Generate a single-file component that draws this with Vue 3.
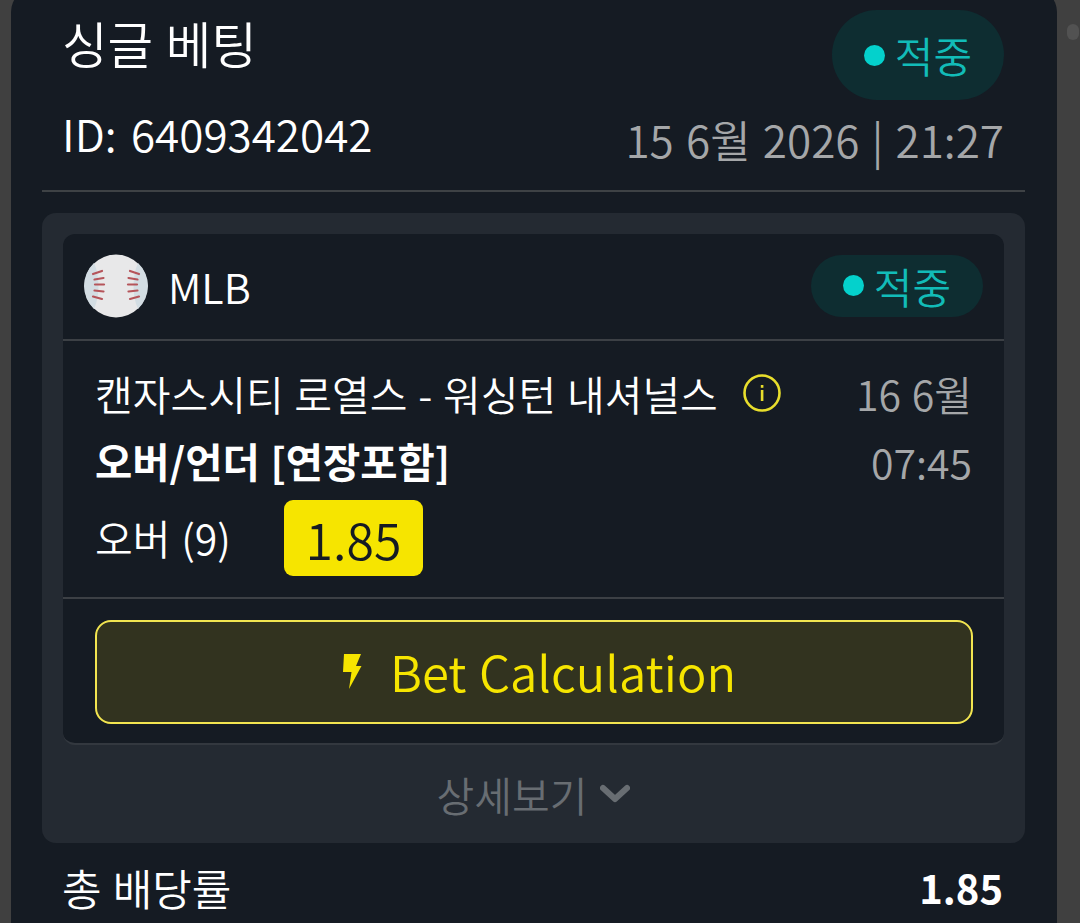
<template>
  <div class="screen">
    <div class="panel">
      <div class="head">
        <div class="head-row">
          <h1 class="title">싱글 베팅</h1>
          <div class="badge badge-lg"><span class="dot"></span>적중</div>
        </div>
        <div class="meta-row">
          <span class="bet-id">ID: {{ bet.id }}</span>
          <span class="bet-date">{{ bet.date }}</span>
        </div>
      </div>

      <div class="outer-card">
        <div class="event-card">
          <div class="league-row">
            <div class="league">
              <svg class="ball" viewBox="0 0 64 64">
                <circle cx="32" cy="32" r="31.5" fill="#e8e8e9" />
                <path d="M10 9 C16 22 16 42 10 55 A31.5 31.5 0 0 1 10 9Z" fill="#d3dde3" />
                <path d="M54 9 C48 22 48 42 54 55 A31.5 31.5 0 0 0 54 9Z" fill="#d3dde3" />
                <g stroke="#b5545a" stroke-width="2.2" stroke-linecap="round" fill="none">
                  <path v-for="s in stitches" :key="s" :d="s" />
                </g>
              </svg>
              <span>MLB</span>
            </div>
            <div class="badge badge-sm"><span class="dot"></span>적중</div>
          </div>

          <div class="match">
            <div class="match-main">
              <div class="teams">
                <span>캔자스시티 로열스 - 워싱턴 내셔널스</span>
                <svg class="info" viewBox="0 0 38 38">
                  <circle cx="19" cy="19" r="17.5" fill="none" stroke="#e8de2c" stroke-width="2.6" />
                  <rect x="17.8" y="16" width="2.6" height="11" fill="#e8de2c" />
                  <rect x="17.8" y="11" width="2.6" height="2.8" fill="#e8de2c" />
                </svg>
              </div>
              <div class="market">오버/언더 [연장포함]</div>
              <div class="pick-row">
                <span class="pick">오버 (9)</span>
                <span class="odds">1.85</span>
              </div>
            </div>
            <div class="match-time">
              <span>16 6월</span>
              <span>07:45</span>
            </div>
          </div>

          <div class="calc-wrap">
            <button class="calc">
              <svg class="bolt" viewBox="0 0 20 36">
                <path d="M2 1 H19 L14 13 H19.5 L7 36 L9.5 19 H1Z" fill="#f6e500" />
              </svg>
              Bet Calculation
            </button>
          </div>
        </div>

        <div class="more">
          상세보기
          <svg class="chev" viewBox="0 0 30 20">
            <path d="M3 4 L15 15 L27 4" fill="none" stroke="#686d72" stroke-width="6" stroke-linecap="round" stroke-linejoin="round" />
          </svg>
        </div>
      </div>

      <div class="total-row">
        <span>총 배당률</span>
        <span class="total">1.85</span>
      </div>
    </div>
    <span class="scroll-dot"></span>
  </div>
</template>

<script setup>
const bet = {
  id: "6409342042",
  date: "15 6월 2026 | 21:27",
};

const stitches = [
  "M9 20 L18 17", "M10.5 25.5 L19.5 24", "M11 30.5 L20 30.5", "M10.5 36.5 L19.5 37.5", "M9 42.5 L18 45",
  "M55 20 L46 17", "M53.5 25.5 L44.5 24", "M53 30.5 L44 30.5", "M53.5 36.5 L44.5 37.5", "M55 42.5 L46 45",
];
</script>

<style>
html,
body {
  margin: 0;
  background: #404040;
  overflow: hidden;
}
</style>

<style scoped>
.screen {
  position: relative;
  width: 1080px;
  height: 923px;
  overflow: hidden;
  background: #404040;
  font-family: "Noto Sans CJK KR", "Noto Sans", sans-serif;
  font-weight: 350;
  word-spacing: 1.6px;
  color: #fff;
}

.panel {
  width: 1046px;
  height: 960px;
  margin-left: 11px;
  margin-top: -12px;
  padding: 12px 32px 0 31px;
  box-sizing: border-box;
  background: #151b23;
  border-radius: 24px;
}

.head {
  border-bottom: 2px solid #3e4245;
  height: 192px;
  box-sizing: border-box;
  padding: 10px 21px 0 20px;
}

.head-row,
.meta-row,
.league-row,
.total-row {
  display: flex;
  justify-content: space-between;
  align-items: center;
}

.head-row {
  height: 90px;
  margin-bottom: 6px;
}

.title {
  margin: 0 0 24px;
  font-size: 49.5px;
  font-weight: 350;
  line-height: 68px;
}

.meta-row {
  height: 70px;
  margin-top: 1px;
  align-items: flex-start;
}

.bet-id {
  font-size: 44px;
  line-height: 50px;
  margin-top: 2px;
  word-spacing: 4.6px;
}

.bet-date {
  font-size: 44px;
  line-height: 50px;
  margin-top: 8px;
  word-spacing: 2.4px;
  color: #a5a7a9;
}

.badge {
  display: flex;
  align-items: center;
  justify-content: center;
  background: #0e2d31;
  color: #12bcb8;
  border-radius: 46px;
  font-size: 42px;
  line-height: 1;
}

.badge-lg {
  width: 172px;
  height: 90px;
}

.badge-sm {
  width: 172px;
  height: 62px;
}

.dot {
  width: 21px;
  height: 21px;
  margin-right: 10px;
  border-radius: 50%;
  background: #04d1cc;
}

.outer-card {
  margin-top: 21px;
  padding: 21px 21px 0;
  height: 630px;
  box-sizing: border-box;
  background: #242a32;
  border-radius: 14px;
}

.event-card {
  height: 511px;
  box-sizing: border-box;
  background: #151b23;
  border-bottom: 2px solid #33383f;
  border-radius: 12px;
  display: flex;
  flex-direction: column;
}

.league-row {
  height: 107px;
  flex: none;
  box-sizing: border-box;
  padding: 0 21px 2px;
  border-bottom: 2px solid #3c4045;
}

.league {
  display: flex;
  align-items: center;
  gap: 20px;
  font-size: 41.5px;
}

.ball {
  width: 64px;
  height: 64px;
}

.match {
  flex: none;
  height: 258px;
  box-sizing: border-box;
  padding: 26px 32px 0;
  display: flex;
  justify-content: space-between;
  border-bottom: 2px solid #3c4045;
}

.teams {
  display: flex;
  align-items: center;
  gap: 25px;
  font-size: 41px;
  line-height: 52px;
  height: 52px;
}

.info {
  width: 38px;
  height: 38px;
}

.market {
  margin-top: 16px;
  font-size: 40.5px;
  line-height: 52px;
  font-weight: 700;
}

.pick-row {
  display: flex;
  align-items: center;
  margin-top: 13px;
}

.pick {
  width: 189px;
  margin-top: -2px;
  font-size: 41px;
}

.odds {
  width: 139px;
  height: 76px;
  display: flex;
  align-items: center;
  justify-content: center;
  background: #f6e500;
  border-radius: 9px;
  color: #151b23;
  font-size: 50px;
}

.match-time {
  display: flex;
  flex-direction: column;
  align-items: flex-end;
  gap: 16px;
  font-size: 41px;
  line-height: 52px;
  color: #a5a7a9;
}

.calc-wrap {
  padding: 21px 31px 0 32px;
}

.calc {
  width: 100%;
  height: 104px;
  box-sizing: border-box;
  padding: 0 0 3px 10px;
  display: flex;
  align-items: center;
  justify-content: center;
  gap: 28px;
  background: #32331f;
  border: 2px solid #f2e550;
  border-radius: 16px;
  color: #f6e500;
  font-family: inherit;
  font-size: 49px;
  font-weight: 350;
  word-spacing: inherit;
}

.bolt {
  width: 20px;
  height: 36px;
}

.more {
  height: 98px;
  display: flex;
  align-items: center;
  justify-content: center;
  gap: 13px;
  color: #686d72;
  font-size: 41px;
}

.chev {
  width: 30px;
  height: 20px;
}

.total-row {
  height: 88px;
  padding: 0 22px 0 20px;
  font-size: 43px;
}

.total {
  font-size: 40px;
  font-weight: 700;
}

.scroll-dot {
  position: absolute;
  left: 1067px;
  top: 24px;
  width: 12px;
  height: 16px;
  border-radius: 6px;
  background: #525252;
}
</style>
